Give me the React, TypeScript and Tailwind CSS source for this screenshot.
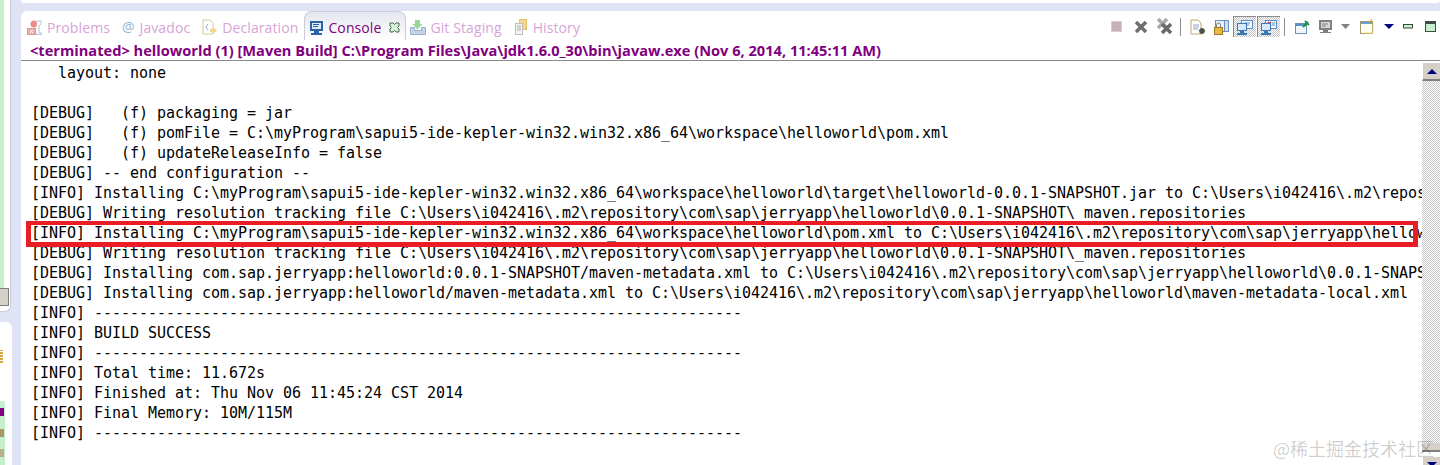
import React from "react";

const lines = [
  "   layout: none",
  "",
  "[DEBUG]   (f) packaging = jar",
  "[DEBUG]   (f) pomFile = C:\\myProgram\\sapui5-ide-kepler-win32.win32.x86_64\\workspace\\helloworld\\pom.xml",
  "[DEBUG]   (f) updateReleaseInfo = false",
  "[DEBUG] -- end configuration --",
  "[INFO] Installing C:\\myProgram\\sapui5-ide-kepler-win32.win32.x86_64\\workspace\\helloworld\\target\\helloworld-0.0.1-SNAPSHOT.jar to C:\\Users\\i042416\\.m2\\repository",
  "[DEBUG] Writing resolution tracking file C:\\Users\\i042416\\.m2\\repository\\com\\sap\\jerryapp\\helloworld\\0.0.1-SNAPSHOT\\_maven.repositories",
  "[INFO] Installing C:\\myProgram\\sapui5-ide-kepler-win32.win32.x86_64\\workspace\\helloworld\\pom.xml to C:\\Users\\i042416\\.m2\\repository\\com\\sap\\jerryapp\\helloworld",
  "[DEBUG] Writing resolution tracking file C:\\Users\\i042416\\.m2\\repository\\com\\sap\\jerryapp\\helloworld\\0.0.1-SNAPSHOT\\_maven.repositories",
  "[DEBUG] Installing com.sap.jerryapp:helloworld:0.0.1-SNAPSHOT/maven-metadata.xml to C:\\Users\\i042416\\.m2\\repository\\com\\sap\\jerryapp\\helloworld\\0.0.1-SNAPSHOT",
  "[DEBUG] Installing com.sap.jerryapp:helloworld/maven-metadata.xml to C:\\Users\\i042416\\.m2\\repository\\com\\sap\\jerryapp\\helloworld\\maven-metadata-local.xml",
  "[INFO] ------------------------------------------------------------------------",
  "[INFO] BUILD SUCCESS",
  "[INFO] ------------------------------------------------------------------------",
  "[INFO] Total time: 11.672s",
  "[INFO] Finished at: Thu Nov 06 11:45:24 CST 2014",
  "[INFO] Final Memory: 10M/115M",
  "[INFO] ------------------------------------------------------------------------",
];

function Svg({ w, h, ml, children }: { w: number; h: number; ml: string; children: React.ReactNode }) {
  return (
    <svg width={w} height={h} viewBox={`0 0 ${w} ${h}`} className={`shrink-0 ${ml}`}>
      {children}
    </svg>
  );
}

function Cross({ x, y, s, c }: { x: number; y: number; s: number; c: string }) {
  return (
    <path d={`M${x} ${y}L${x + s} ${y + s}M${x + s} ${y}L${x} ${y + s}`} stroke={c} strokeWidth="3.5" fill="none" />
  );
}

function Monitor({ x, y, c }: { x: number; y: number; c: string }) {
  return (
    <g>
      <rect x={x + 0.5} y={y + 0.5} width="9" height="7" fill="#d8e8f8" stroke={c} />
      <rect x={x + 3} y={y + 8} width="4" height="2" fill={c} />
      <rect x={x} y={y + 10} width="10" height="2" fill={c} />
    </g>
  );
}

function Label({ text, ml }: { text: string; ml: string }) {
  return <span className={`text-[14px] text-[#d6a4d6] tracking-[0.1px] ${ml}`}>{text}</span>;
}

function Sep({ ml }: { ml: string }) {
  return <div className={`w-[1px] h-[18px] bg-[#8c8c8c] shrink-0 ${ml}`} />;
}

function TabBar() {
  return (
    <div className="h-[29px] pt-[3px] flex items-center shrink-0 font-['Open_Sans',sans-serif]">
      <Svg w={15} h={15} ml="ml-[6px]">
        <rect x="0.500" y="8.500" width="8" height="6" fill="#f0a8a8" stroke="#e09898" />
        <path d="M3 10l3 3M6 10l-3 3" stroke="#fff" />
        <circle cx="7" cy="4" r="3.500" fill="#ec8a8a" />
        <path d="M10 1h4v3l-2 2v7h3v1.500H9v-2" fill="#fff" stroke="#b4c4d0" />
      </Svg>
      <Label text="Problems" ml="ml-[5px]" />
      <span className="text-[14px] text-[#8fb4d0] ml-[12px] leading-none">@</span>
      <Label text="Javadoc" ml="ml-[5px]" />
      <Svg w={15} h={16} ml="ml-[12px]">
        <path d="M1 1h7l3 3v11H1z" fill="#fff" stroke="#d8c8a0" />
        <path d="M6 5L4 8l2 3" fill="none" stroke="#90b0c8" />
        <path d="M8 10h3V8l4 3.500L11 15v-2H8z" fill="#f0d890" />
      </Svg>
      <Label text="Declaration" ml="ml-[5px]" />
      <div className="ml-[6px] w-[102px] -mt-[3px] self-stretch pt-[3px] rounded-t-[8px] border-t border-x border-[#c8cdd8] bg-gradient-to-b from-[#e4e7f0] to-[#ffffff] flex items-center">
        <Svg w={13} h={14} ml="ml-[5px]">
          <rect x="0" y="0" width="13" height="10" fill="#2a63a8" />
          <rect x="2" y="2" width="9" height="6" fill="#dcebf8" />
          <rect x="3" y="3" width="6" height="1" fill="#2a63a8" />
          <rect x="3" y="5" width="5" height="1" fill="#2a63a8" />
          <rect x="4" y="10" width="5" height="2" fill="#2a63a8" />
          <rect x="1" y="12" width="11" height="2" fill="#2a63a8" />
        </Svg>
        <span className="text-[14px] text-[#800080] ml-[5px] tracking-[0.1px]">Console</span>
        <Svg w={11} h={11} ml="ml-[8px]">
          <path d="M1 1h3l1.500 1.500L7 1h3v3L8.500 5.500 10 7v3H7L5.500 8.500 4 10H1V7l1.500-1.500L1 4z" fill="#d8f0d8" stroke="#4a6a50" />
        </Svg>
      </div>
      <Svg w={16} h={16} ml="ml-[4px]">
        <path d="M0.500 8.500h4v3h7v-3h4v7H0.500z" fill="#c4d4e8" stroke="#9ab0c8" />
        <path d="M5 1h5v4h2.500L7.500 10.500 2.500 5H5z" fill="#9ad89a" />
      </Svg>
      <Label text="Git Staging" ml="ml-[4px]" />
      <Svg w={12} h={16} ml="ml-[13px]">
        <rect x="4.500" y="0.500" width="7" height="10" fill="#f4d890" stroke="#e0c070" />
        <rect x="0.500" y="4.500" width="7" height="11" fill="#f4f4f0" stroke="#c0c0b8" />
        <path d="M2 7h4M2 9h4M2 11h4" stroke="#b0b0b0" />
      </Svg>
      <Label text="History" ml="ml-[6px]" />
    </div>
  );
}

function Toolbar() {
  return (
    <div className="absolute right-0 top-[4px] h-[23px] flex items-center">
      <Svg w={11} h={11} ml="">
        <rect x="0.500" y="0.500" width="10" height="10" fill="#c8b0ba" stroke="#d4d0d0" />
      </Svg>
      <Svg w={14} h={14} ml="ml-[12px]">
        <Cross x={2} y={2} s={10} c="#6e6e6e" />
      </Svg>
      <Svg w={16} h={17} ml="ml-[9px]">
        <Cross x={1} y={1} s={9} c="#a8a8a8" />
        <Cross x={5} y={6} s={9} c="#6a6a6a" />
      </Svg>
      <Sep ml="ml-[7px]" />
      <Svg w={16} h={16} ml="ml-[9px]">
        <path d="M1 1h7l3 3v11H1z" fill="#fff" stroke="#c0a870" />
        <path d="M3 6h6M3 8h6M3 10h5" stroke="#8ea4c8" />
        <Cross x={10} y={10} s={4} c="#505050" />
      </Svg>
      <Svg w={15} h={16} ml="ml-[8px]">
        <rect x="1.500" y="1.500" width="13" height="11" fill="#e8f0f8" stroke="#6a90c0" />
        <rect x="10.500" y="1.500" width="4" height="11" fill="#d0e0f0" stroke="#6a90c0" />
        <rect x="0.500" y="8.500" width="8" height="7" fill="#e8b840" stroke="#a07820" />
        <path d="M2.500 8V6a2 2 0 014 0v2" fill="none" stroke="#808080" />
      </Svg>
      <div className="ml-[4px] w-[23px] h-[21px] border-t border-l border-[#8c8c8c] bg-[repeating-conic-gradient(#c4c4c4_0_25%,#ffffff_0_50%)] bg-[length:2px_2px] flex items-center justify-center">
        <Svg w={16} h={15} ml="">
          <rect x="4.500" y="0.500" width="11" height="8" fill="#f4f8fc" stroke="#5a90c8" />
          <path d="M7 3h6M7 5h5" stroke="#5a90c8" />
          <Monitor x={0} y={3} c="#3a78b8" />
        </Svg>
      </div>
      <div className="ml-[1px] w-[23px] h-[21px] border-t border-l border-[#8c8c8c] bg-[repeating-conic-gradient(#c4c4c4_0_25%,#ffffff_0_50%)] bg-[length:2px_2px] flex items-center justify-center">
        <Svg w={16} h={15} ml="">
          <rect x="4.500" y="0.500" width="11" height="8" fill="#f4f8fc" stroke="#5a90c8" />
          <path d="M7 2l3 4M10 2L7 6" stroke="#d03040" strokeWidth="1.500" />
          <path d="M11 3h3M11 5h3" stroke="#5a90c8" />
          <Monitor x={0} y={3} c="#3a78b8" />
        </Svg>
      </div>
      <Sep ml="ml-[4px]" />
      <Svg w={15} h={14} ml="ml-[10px]">
        <rect x="0.500" y="3.500" width="11" height="10" fill="#f0f6fc" stroke="#6a90b8" />
        <rect x="1" y="4" width="10" height="2" fill="#5a90c8" />
        <path d="M8 7l5-5M10 1l4 4" stroke="#1a9040" strokeWidth="2" />
      </Svg>
      <Svg w={14} h={14} ml="ml-[9px]">
        <rect x="0" y="0" width="13" height="10" fill="#808080" />
        <rect x="2" y="2" width="9" height="6" fill="#d8d8d8" />
        <path d="M3 4h6M3 6h4" stroke="#808080" />
        <rect x="4" y="10" width="5" height="2" fill="#808080" />
        <rect x="1" y="12" width="11" height="1" fill="#808080" />
      </Svg>
      <Svg w={9} h={5} ml="ml-[8px]">
        <path d="M0 0h9L4.500 5z" fill="#808080" />
      </Svg>
      <Svg w={15} h={15} ml="ml-[10px]">
        <rect x="0.500" y="2.500" width="12" height="12" fill="#fffdf0" stroke="#a09868" />
        <rect x="1" y="3" width="11" height="2" fill="#6aa0d8" />
        <path d="M11 0v5M9 2.500h4" stroke="#c09830" />
        <path d="M13 6v8H4" fill="none" stroke="#f0d878" />
      </Svg>
      <Svg w={10} h={5} ml="ml-[9px]">
        <path d="M0 0h10L5 5z" fill="#000080" />
      </Svg>
      <Svg w={10} h={5} ml="ml-[9px]">
        <rect x="0.500" y="0.500" width="9" height="3.500" fill="#c6efce" stroke="#3c4c40" />
      </Svg>
      <Svg w={11} h={11} ml="ml-[12px]">
        <rect x="0.500" y="0.500" width="10" height="10" fill="#c6efce" stroke="#3c4c40" />
        <rect x="1" y="1" width="9" height="2" fill="#3c4c40" />
      </Svg>
      <div className="w-[4px]" />
    </div>
  );
}

function Scrollbar() {
  return (
    <div className="w-[18px] shrink-0 flex flex-col">
      <div className="mt-[1px] h-[19px] shrink-0 bg-[#d4d0c8] border-t border-l border-white border-b-2 border-b-[#808080] flex items-center justify-center">
        <div className="w-0 h-0 border-l-[5px] border-r-[5px] border-b-[5px] border-l-transparent border-r-transparent border-b-[#000080]" />
      </div>
      <div className="flex-1 bg-[repeating-conic-gradient(#c8c8c8_0_25%,#ffffff_0_50%)] bg-[length:2px_2px]" />
      <div className="h-[9px] shrink-0 bg-[#d4d0c8] border-b-2 border-b-[#808080]" />
      <div className="h-[9px] shrink-0 mt-[4px] overflow-hidden bg-[#d4d0c8] border-t border-l border-white flex items-start justify-center pt-[5px]">
        <div className="w-0 h-0 border-l-[5px] border-r-[5px] border-t-[5px] border-l-transparent border-r-transparent border-t-[#000080]" />
      </div>
    </div>
  );
}

function LeftEdge() {
  return (
    <div className="w-[21px] shrink-0 flex flex-col">
      <div className="h-[312px] w-[11px] bg-white rounded-br-[6px] border-r border-b border-[#c8ccd8] flex flex-col">
        <div className="h-[288px] w-[4px] bg-[#c6efce]" />
        <div className="h-[18px] w-[9px] bg-[#d4d0c8] border-y border-r border-[#808080]" />
      </div>
      <div className="mt-[10px] flex-1 w-[12px] bg-white rounded-tr-[6px] flex flex-col">
        <div className="mt-[28px] h-[13px] w-[3px] bg-[repeating-linear-gradient(0deg,#d8a840_0_2px,#fff0_2px_3px)]" />
        <div className="mt-[38px] flex-1 w-[5px] bg-[#c6efce] flex flex-col items-start">
          <div className="mt-[7px] w-[4px] h-[8px] bg-[#800080]" />
          <div className="mt-[13px] w-[4px] h-[8px] bg-[#a89868]" />
          <div className="mt-[12px] w-[4px] h-[8px] bg-[#b8b088]" />
        </div>
      </div>
    </div>
  );
}

export default function App() {
  return (
    <div className="w-[1440px] h-[465px] overflow-hidden bg-[#dfe3f5] flex relative">
      <LeftEdge />
      <div className="flex-1 min-w-0 flex flex-col">
        <div className="h-[3px] bg-white shrink-0 rounded-b-[3px]" />
        <div className="h-[8px] shrink-0" />
        <div className="flex-1 min-h-0 bg-white rounded-tl-[6px] flex flex-col relative">
          <TabBar />
          <Toolbar />
          <div className="h-[21px] shrink-0 pl-[9px] pt-[2px] flex items-center border-b border-[#8a8a8a] font-['Open_Sans',sans-serif] font-bold text-[14.620px] text-[#800080] whitespace-nowrap">
            {"<terminated> helloworld (1) [Maven Build] C:\\Program Files\\Java\\jdk1.6.0_30\\bin\\javaw.exe (Nov 6, 2014, 11:45:11 AM)"}
          </div>
          <div className="flex-1 min-h-0 flex">
            <div className="flex-1 min-w-0 overflow-hidden pl-[10px] pt-[2px]">
              {lines.map((l, i) => (
                <div key={i} className="h-[20px] leading-[20px] text-[15px] tracking-[-0.03px] font-['DejaVu_Sans_Mono',monospace] text-black whitespace-pre">
                  {l}
                </div>
              ))}
            </div>
            <Scrollbar />
          </div>
        </div>
      </div>
      {/* red highlight */}
      <div className="absolute left-[26px] top-[221px] w-[1392px] h-[26px] border-[5px] border-t-[4px] border-[#ec1c24]" />
      {/* watermark */}
      <div className="absolute left-[1273px] top-[436px] text-[18px] leading-[24px] whitespace-nowrap text-[#00000033] font-['Noto_Sans_CJK_SC',sans-serif]">
        @稀土掘金技术社区
      </div>
    </div>
  );
}
